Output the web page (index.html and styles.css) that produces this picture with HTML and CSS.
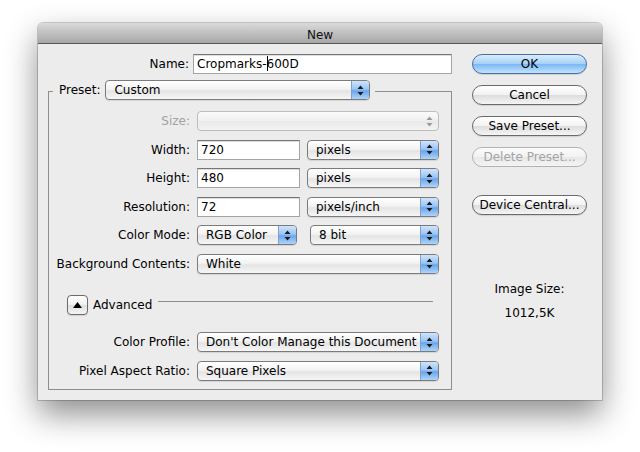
FILE: index.html
```html
<!DOCTYPE html>
<html lang="en">
<head>
    <meta charset="UTF-8">
    <title>New</title>
    <link rel="stylesheet" href="styles.css">
</head>
<body>

    <div class="page">
        <div class="dialog">
            <div class="titlebar">New</div>

            <div class="content">
                <div class="main">
                    <div class="name-row">
                        <span class="name-label">Name:</span>
                        <div class="text-field name-field">Cropmarks-<span class="caret"></span>600D</div>
                    </div>

                    <fieldset class="preset">
                        <legend class="preset-legend">
                            <span class="legend-label">Preset:</span>
                            <div class="popup preset-popup">
                                <span class="popup-text">Custom</span>
                                <span class="popup-arrows"><svg width="7" height="11" viewBox="0 0 7 11"><path d="M3.5 0.5 L6.5 4 L0.5 4 Z M0.5 7 L6.5 7 L3.5 10.5 Z"/></svg></span>
                            </div>
                        </legend>

                        <div class="rows">
                            <div class="row">
                                <span class="label disabled">Size:</span>
                                <div class="popup popup-wide popup-disabled">
                                    <span class="popup-text"></span>
                                    <span class="popup-arrows"><svg width="7" height="11" viewBox="0 0 7 11"><path d="M3.5 0.5 L6.5 4 L0.5 4 Z M0.5 7 L6.5 7 L3.5 10.5 Z"/></svg></span>
                                </div>
                            </div>

                            <div class="row">
                                <span class="label">Width:</span>
                                <div class="text-field num-field">720</div>
                                <div class="popup unit-popup">
                                    <span class="popup-text">pixels</span>
                                    <span class="popup-arrows"><svg width="7" height="11" viewBox="0 0 7 11"><path d="M3.5 0.5 L6.5 4 L0.5 4 Z M0.5 7 L6.5 7 L3.5 10.5 Z"/></svg></span>
                                </div>
                            </div>

                            <div class="row">
                                <span class="label">Height:</span>
                                <div class="text-field num-field">480</div>
                                <div class="popup unit-popup">
                                    <span class="popup-text">pixels</span>
                                    <span class="popup-arrows"><svg width="7" height="11" viewBox="0 0 7 11"><path d="M3.5 0.5 L6.5 4 L0.5 4 Z M0.5 7 L6.5 7 L3.5 10.5 Z"/></svg></span>
                                </div>
                            </div>

                            <div class="row">
                                <span class="label">Resolution:</span>
                                <div class="text-field num-field">72</div>
                                <div class="popup unit-popup">
                                    <span class="popup-text">pixels/inch</span>
                                    <span class="popup-arrows"><svg width="7" height="11" viewBox="0 0 7 11"><path d="M3.5 0.5 L6.5 4 L0.5 4 Z M0.5 7 L6.5 7 L3.5 10.5 Z"/></svg></span>
                                </div>
                            </div>

                            <div class="row">
                                <span class="label">Color Mode:</span>
                                <div class="popup mode-popup">
                                    <span class="popup-text">RGB Color</span>
                                    <span class="popup-arrows"><svg width="7" height="11" viewBox="0 0 7 11"><path d="M3.5 0.5 L6.5 4 L0.5 4 Z M0.5 7 L6.5 7 L3.5 10.5 Z"/></svg></span>
                                </div>
                                <div class="popup bits-popup">
                                    <span class="popup-text">8 bit</span>
                                    <span class="popup-arrows"><svg width="7" height="11" viewBox="0 0 7 11"><path d="M3.5 0.5 L6.5 4 L0.5 4 Z M0.5 7 L6.5 7 L3.5 10.5 Z"/></svg></span>
                                </div>
                            </div>

                            <div class="row">
                                <span class="label">Background Contents:</span>
                                <div class="popup popup-wide">
                                    <span class="popup-text">White</span>
                                    <span class="popup-arrows"><svg width="7" height="11" viewBox="0 0 7 11"><path d="M3.5 0.5 L6.5 4 L0.5 4 Z M0.5 7 L6.5 7 L3.5 10.5 Z"/></svg></span>
                                </div>
                            </div>

                            <div class="row advanced-row">
                                <span class="toggle"><svg width="9" height="6" viewBox="0 0 9 6"><path d="M4.5 0 L9 6 L0 6 Z"/></svg></span>
                                <span class="advanced-label">Advanced</span>
                                <span class="advanced-line"></span>
                            </div>

                            <div class="row profile-row">
                                <span class="label">Color Profile:</span>
                                <div class="popup popup-wide">
                                    <span class="popup-text">Don't Color Manage this Document</span>
                                    <span class="popup-arrows"><svg width="7" height="11" viewBox="0 0 7 11"><path d="M3.5 0.5 L6.5 4 L0.5 4 Z M0.5 7 L6.5 7 L3.5 10.5 Z"/></svg></span>
                                </div>
                            </div>

                            <div class="row">
                                <span class="label">Pixel Aspect Ratio:</span>
                                <div class="popup popup-wide">
                                    <span class="popup-text">Square Pixels</span>
                                    <span class="popup-arrows"><svg width="7" height="11" viewBox="0 0 7 11"><path d="M3.5 0.5 L6.5 4 L0.5 4 Z M0.5 7 L6.5 7 L3.5 10.5 Z"/></svg></span>
                                </div>
                            </div>
                        </div>
                    </fieldset>
                </div>

                <div class="side">
                    <button class="btn btn-default">OK</button>
                    <button class="btn">Cancel</button>
                    <button class="btn">Save Preset...</button>
                    <button class="btn" disabled>Delete Preset...</button>
                    <button class="btn btn-device">Device Central...</button>

                    <div class="image-size">
                        <p>Image Size:</p>
                        <p>1012,5K</p>
                    </div>
                </div>
            </div>
        </div>
    </div>

</body>
</html>
```

FILE: styles.css
```css
* {
    box-sizing: border-box;
}

html, body {
    height: 100%;
}

body {
    margin: 0;
    background: #ffffff;
    font-family: "DejaVu Sans", "Liberation Sans", sans-serif;
    font-size: 12px;
    color: #000;
}

.page {
    height: 452px;
    padding: 23px 0 0 38px;
}

.dialog {
    width: 564px;
    height: 377px;
    background: #ececec;
    border-radius: 5px 5px 0 0;
    box-shadow: 0 14px 32px rgba(0, 0, 0, 0.45), 0 0 0 1px rgba(0, 0, 0, 0.18);
}

.titlebar {
    height: 21px;
    padding-top: 3px;
    line-height: 18px;
    text-align: center;
    color: #111;
    border-bottom: 1px solid #565656;
    border-radius: 5px 5px 0 0;
    background: linear-gradient(#dadada, #a7a7a7);
}

.content {
    display: flex;
    padding: 10px 15px 0 10px;
}

.main {
    width: 404px;
}

/* name */

.name-row {
    display: flex;
    height: 20px;
}

.name-label {
    width: 141px;
    margin-right: 4px;
    text-align: right;
    line-height: 20px;
}

.text-field {
    height: 20px;
    padding: 0 3px;
    line-height: 18px;
    background: #fff;
    border: 1px solid #a4a4a4;
    border-top-color: #767676;
    box-shadow: inset 0 1px 0 #dedede;
    white-space: nowrap;
}

.name-field {
    width: 259px;
}

.caret {
    display: inline-block;
    width: 1px;
    height: 15px;
    margin: 0 -1px 0 0;
    vertical-align: -3px;
    background: #000;
}

.num-field {
    width: 103px;
    margin-left: 7px;
}

/* preset box */

.preset {
    margin: 6px 0 0;
    padding: 0 0 8px;
    border: 1px solid #8e8e8e;
}

.preset-legend {
    display: flex;
    height: 22px;
    margin-left: 4px;
    padding: 0 5px 0 6px;
}

.legend-label {
    line-height: 20px;
    margin-right: 5px;
}

.preset-popup {
    width: 265px;
}

.rows {
    display: flex;
    flex-direction: column;
    gap: 8.5px;
    margin-top: 9px;
}

.row {
    display: flex;
    height: 20px;
}

.label {
    width: 141px;
    text-align: right;
    line-height: 20px;
}

.label.disabled {
    color: #a2a2a2;
}

/* popups */

.popup {
    display: flex;
    height: 20px;
    border: 1px solid #7b7b7b;
    border-radius: 4px;
    overflow: hidden;
    background: linear-gradient(#ffffff, #f3f3f3 45%, #e4e4e4 55%, #f6f6f6);
    box-shadow: 0 1px 1px rgba(0, 0, 0, 0.1);
}

.popup-text {
    flex: 1;
    padding-left: 8px;
    line-height: 18px;
    white-space: nowrap;
    overflow: hidden;
}

.popup-arrows {
    display: flex;
    align-items: center;
    justify-content: center;
    width: 18px;
    border-left: 1px solid #7f9fd0;
    background: linear-gradient(#cfe4fb, #9ac5f4 45%, #6aa5ea 55%, #afd5fb);
}

.popup-arrows svg {
    fill: #1a1a1a;
}

.popup-wide {
    width: 242px;
    margin-left: 7px;
}

.popup-disabled {
    border-color: #bdbdbd;
    background: linear-gradient(#fbfbfb, #efefef 50%, #e9e9e9 51%, #f3f3f3);
    box-shadow: none;
}

.popup-disabled .popup-arrows {
    border-left: none;
    background: none;
}

.popup-disabled .popup-arrows svg {
    fill: #9a9a9a;
}

.unit-popup {
    width: 132px;
    margin-left: 7px;
}

.mode-popup {
    width: 100px;
    margin-left: 7px;
}

.bits-popup {
    width: 129px;
    margin-left: 13px;
}

/* advanced */

.advanced-row {
    margin-top: 13px;
    padding-left: 18px;
}

.toggle {
    display: flex;
    align-items: center;
    justify-content: center;
    width: 21px;
    height: 20px;
    border: 1px solid #6c6c6c;
    border-radius: 4px;
    background: linear-gradient(#ffffff, #f0f0f0 50%, #dedede 51%, #f4f4f4);
    box-shadow: 0 1px 1px rgba(0, 0, 0, 0.12);
}

.advanced-label {
    margin-left: 5px;
    line-height: 20px;
}

.advanced-line {
    flex: 1;
    height: 1px;
    margin: 6px 18px 0 6px;
    background: #8e8e8e;
}

.profile-row {
    margin-top: 8.5px;
}

/* side buttons */

.side {
    display: flex;
    flex-direction: column;
    width: 115px;
    margin-left: 20px;
}

.btn {
    height: 20px;
    padding: 0;
    font: inherit;
    color: #000;
    line-height: 18px;
    text-align: center;
    border: 1px solid #6a6a6a;
    border-radius: 10px;
    background: linear-gradient(#ffffff, #f2f2f2 50%, #dddddd 51%, #f5f5f5);
    box-shadow: 0 1px 1px rgba(0, 0, 0, 0.12);
}

.btn + .btn {
    margin-top: 11px;
}

.btn-default {
    border-color: #4b6ea6;
    background: linear-gradient(#d9edfd, #a6d0f8 50%, #7ab7f3 51%, #c2e3fe);
}

.btn:disabled {
    color: #a4a4a4;
    border-color: #b3b3b3;
    background: linear-gradient(#fbfbfb, #f2f2f2 50%, #e8e8e8 51%, #f4f4f4);
    box-shadow: none;
}

.btn.btn-device {
    margin-top: 28px;
}

.image-size {
    margin-top: 66px;
    text-align: center;
}

.image-size p {
    margin: 0 0 8px;
    line-height: 16px;
}
```
